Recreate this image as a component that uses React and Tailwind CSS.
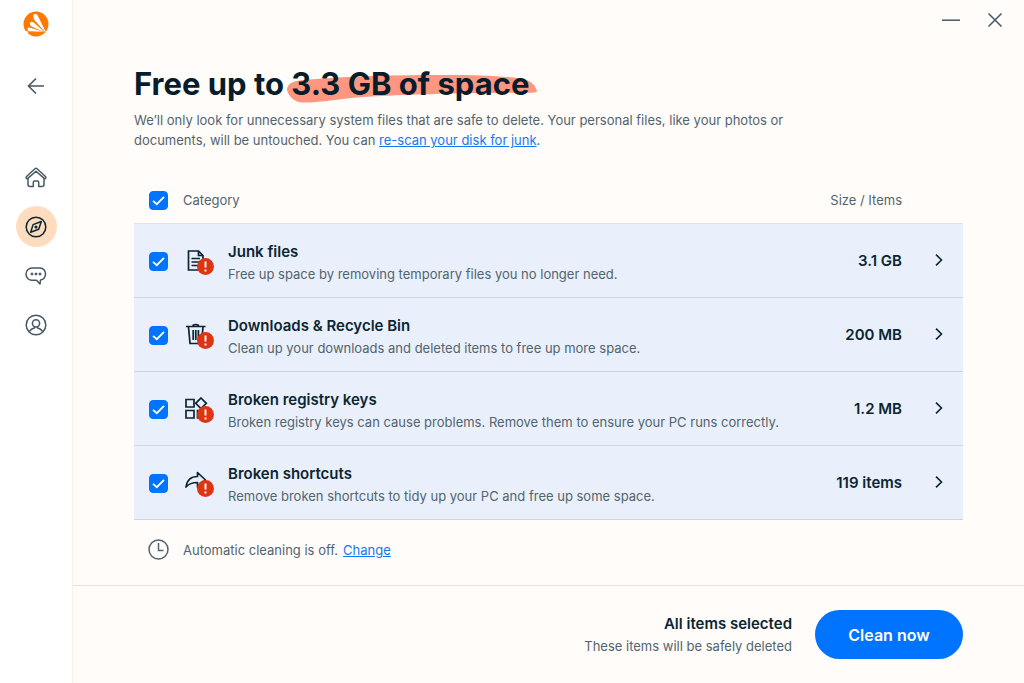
import React, { useState } from 'react';

const categories = [
    { id: 'junk', title: 'Junk files', text: 'Free up space by removing temporary files you no longer need.', size: '3.1 GB' },
    { id: 'downloads', title: 'Downloads & Recycle Bin', text: 'Clean up your downloads and deleted items to free up more space.', size: '200 MB' },
    { id: 'registry', title: 'Broken registry keys', text: 'Broken registry keys can cause problems. Remove them to ensure your PC runs correctly.', size: '1.2 MB' },
    { id: 'shortcuts', title: 'Broken shortcuts', text: 'Remove broken shortcuts to tidy up your PC and free up some space.', size: '119 items' },
];

const Logo = () => (
    <svg className="h-[26px] w-[26px]" viewBox="0 0 26 26" aria-hidden="true">
        <circle cx="13" cy="13" r="12.5" fill="#ff7800" />
        <g fill="#fff">
            <path d="M10.4 5.7C10 4.300 10.700 3.200 12 3.100C13.200 3 14.300 3.600 14.900 4.900L22.600 20.600C22.900 21.200 22.500 21.400 22.100 21L11.400 9C10.700 8.100 10.500 6.800 10.400 5.700Z" />
            <path d="M6.900 12.800C6.700 11.500 7.500 10.700 8.600 10.700C9.500 10.700 10.200 11.100 11 11.800L20.700 20.300C21.100 20.700 20.900 20.900 20.400 20.700L8.500 15.400C7.500 14.900 7 14 6.900 12.800Z" />
            <path d="M4.500 18.100C4.500 17.100 5.300 16.400 6.300 16.500L18.700 20.200C19.200 20.500 19.100 20.700 18.600 20.700L6.300 20.200C5.200 20.100 4.500 19.200 4.500 18.100Z" />
            <path d="M2 19.800L5.600 20.800L4.400 23.200Z" />
        </g>
    </svg>
);

const navItems = [
    {
        label: 'Home',
        icon: (
            <>
                <path d="M1.300 9.700L10.200 1.500Q11 0.900 11.800 1.500L20.700 9.700V11.200Q20 12.100 19.200 11.400L11 4.200L2.800 11.400Q2 12.100 1.300 11.200Z" />
                <path d="M3 11.500V17.500Q3 19.500 5 19.500H8.300V15.500Q8.300 14 9.500 14H12.500Q13.700 14 13.700 15.500V19.500H17Q19 19.500 19 17.500V11.500" />
            </>
        ),
    },
    {
        label: 'Explore',
        icon: (
            <>
                <circle cx="11" cy="11" r="9.800" />
                <path d="M16.300 5.500L13.700 13.200L5.700 16.300L8.100 8.600Z" />
                <circle cx="11" cy="11" r="0.800" fill="currentColor" />
            </>
        ),
    },
    {
        label: 'Messages',
        icon: (
            <>
                <path d="M7 3H15A5.700 5.700 0 0 1 20.500 9A5.700 5.700 0 0 1 15.500 15L15 19L11.500 15.200H7A5.900 6 0 0 1 7 3Z" />
                <g fill="currentColor" strokeWidth="0.800">
                    <circle cx="7" cy="9" r="1.100" />
                    <circle cx="11" cy="9" r="1.100" />
                    <circle cx="15" cy="9" r="1.100" />
                </g>
            </>
        ),
    },
    {
        label: 'Account',
        icon: (
            <>
                <circle cx="11" cy="11" r="9.800" />
                <circle cx="11" cy="9.300" r="3.600" />
                <path d="M4.300 17.500Q6.700 14.200 9.500 14V12.700M12.500 12.700V14Q15.300 14.200 17.700 17.500" />
            </>
        ),
    },
];

const categoryIcons = {
    junk: (
        <>
            <path d="M3.500 2H13.500L18 6.500V21H3.500Z" />
            <path d="M13.500 2V6.500H18" />
            <path d="M6.500 9.500H15M6.500 13H15M6.500 16.500H13" />
        </>
    ),
    downloads: (
        <>
            <path d="M1 3.500H20.500M8 3Q8 1.500 10.800 1.500Q13.500 1.500 13.500 3" />
            <path d="M3.500 4L5 20.500H16.500L18 4M8.200 7V17M10.800 7V17M13.400 7V17" />
        </>
    ),
    registry: (
        <>
            <path d="M1 2.500H9V10H1ZM1 13.500H9V21H1ZM12.500 13.500H20V21H12.500Z" />
            <path d="M16 1L21.300 6.300L16 11.500L10.700 6.300Z" />
        </>
    ),
    shortcuts: (
        <path d="M1 16C2 9 6.500 5.500 12.500 5.500V1.500L20.500 9L12.500 16V11.500C7.500 11.500 4 12.500 1 16Z" strokeLinejoin="round" />
    ),
};

const CategoryIcon = ({ id }) => (
    <svg className="block h-7 w-[30px]" viewBox="0 0 30 28" fill="none" aria-hidden="true">
        <g stroke="#0b2532" strokeWidth="1.700">{categoryIcons[id]}</g>
        <circle cx="20.500" cy="17.500" r="8.500" fill="#dd3514" />
        <path d="M20.500 12.600V18.600M20.500 20.600V22.400" stroke="#fff" strokeWidth="1.900" />
    </svg>
);

const Checkbox = ({ label, checked, onChange }) => (
    <span className="grid h-[19px] w-[19px]">
        <input
            type="checkbox"
            aria-label={label}
            checked={checked}
            onChange={onChange}
            className="peer col-start-1 row-start-1 h-[19px] w-[19px] appearance-none rounded border border-[#556770] checked:border-[#0074ff] checked:bg-[#0074ff]"
        />
        <svg
            className="pointer-events-none invisible col-start-1 row-start-1 h-[19px] w-[19px] peer-checked:visible"
            viewBox="0 0 19 19"
            fill="none"
            aria-hidden="true"
        >
            <path d="M4 9.800L7.800 13.200L15 5.800" stroke="#fff" strokeWidth="1.800" />
        </svg>
    </span>
);

const Sidebar = () => (
    <aside className="flex w-[73px] shrink-0 flex-col items-center border-r border-[#ffeee2] bg-white pt-[11px] text-[#455964]">
        <Logo />
        <button type="button" aria-label="Back" className="mt-9 flex h-[26px] w-10 items-center justify-center">
            <svg className="h-5 w-5" viewBox="0 0 20 20" fill="none" stroke="currentColor" strokeWidth="1.600" aria-hidden="true">
                <path d="M18 10H2.500M10 2.500L2.500 10L10 17.500" />
            </svg>
        </button>
        <nav className="mt-[58px] flex flex-col gap-2">
            {navItems.map((item) => (
                <a
                    key={item.label}
                    href="#"
                    aria-label={item.label}
                    className={
                        item.label === 'Explore'
                            ? 'flex h-[41px] w-[41px] items-center justify-center rounded-full bg-[#ffdcbd] text-[#0b2532]'
                            : 'flex h-[41px] w-[41px] items-center justify-center'
                    }
                >
                    <svg className="h-[22px] w-[22px]" viewBox="0 0 22 22" fill="none" stroke="currentColor" strokeWidth="1.500" strokeLinejoin="round" aria-hidden="true">
                        {item.icon}
                    </svg>
                </a>
            ))}
        </nav>
    </aside>
);

const App = () => {
    const [selected, setSelected] = useState(categories.map((c) => c.id));

    const allSelected = selected.length === categories.length;

    const toggle = (id) => {
        setSelected(selected.includes(id) ? selected.filter((s) => s !== id) : [...selected, id]);
    };

    const toggleAll = () => {
        setSelected(allSelected ? [] : categories.map((c) => c.id));
    };

    return (
        <div className="flex min-h-screen bg-[#fffcf9] font-['Inter',sans-serif] text-[13px] text-[#52646e]">
            <Sidebar />
            <div className="flex min-w-0 flex-1 flex-col">
                <header className="flex h-10 items-center justify-end gap-4 pr-[15px]">
                    <button type="button" aria-label="Minimize" className="flex h-7 w-7 items-center justify-center">
                        <svg className="h-5 w-5" viewBox="0 0 20 20" stroke="#455964" strokeWidth="1.500" aria-hidden="true">
                            <path d="M1 10.200H19" />
                        </svg>
                    </button>
                    <button type="button" aria-label="Close" className="flex h-7 w-7 items-center justify-center">
                        <svg className="h-5 w-5" viewBox="0 0 20 20" stroke="#455964" strokeWidth="1.500" aria-hidden="true">
                            <path d="M3.500 3.500L16.500 16.500M16.500 3.500L3.500 16.500" />
                        </svg>
                    </button>
                </header>

                <main className="flex-1 px-[61px] pt-6">
                    <h1 className="text-[31px] leading-10 font-bold text-[#071d2b]">
                        Free up to{' '}
                        <span className="relative isolate inline-block">
                            <svg
                                className="absolute top-[10px] -left-1 -z-10 h-[30px] w-[250px]"
                                viewBox="0 0 250 30"
                                preserveAspectRatio="none"
                                aria-hidden="true"
                            >
                                <path d="M0 15C1 9 6 7 16 6C60 2 110 1 160 1C190 1 225 2 240 6C246 9 250 14 250 17.500C248 19 244 19 238 18.700C190 19 110 20 64 24C45 26 30 29 15 28.500C6 28 0 20 0 15Z" fill="#ff967f" />
                            </svg>
                            3.3 GB of space
                        </span>
                    </h1>
                    <p className="mt-[6px] max-w-[670px] leading-5">
                        We’ll only look for unnecessary system files that are safe to delete. Your personal files, like your photos or documents, will be untouched. You can{' '}
                        <a href="#" className="text-[#1478f0] underline">re-scan your disk for junk</a>.
                    </p>

                    <table className="mt-7 w-full">
                        <thead>
                            <tr className="h-[45px] border-b border-[#e3e3e4] text-left">
                                <th className="w-[49px] pl-[15px]">
                                    <Checkbox label="Select all" checked={allSelected} onChange={toggleAll} />
                                </th>
                                <th colSpan={2} className="font-normal">Category</th>
                                <th className="w-[120px] text-right font-normal">Size / Items</th>
                                <th className="w-[61px]" aria-label="Details" />
                            </tr>
                        </thead>
                        <tbody>
                            {categories.map((c) => (
                                <tr key={c.id} className="h-[74px] border-b border-[#ccd6e2] bg-[#e9f0fb]">
                                    <td className="w-[49px] pt-[2px] pl-[15px]">
                                        <Checkbox label={c.title} checked={selected.includes(c.id)} onChange={() => toggle(c.id)} />
                                    </td>
                                    <td className="w-[45px] pt-[6px] pl-[2px]">
                                        <CategoryIcon id={c.id} />
                                    </td>
                                    <td className="pt-[6px]">
                                        <div className="text-[15px] leading-[22px] font-semibold text-[#0b2532]">{c.title}</div>
                                        <div className="leading-[22px]">{c.text}</div>
                                    </td>
                                    <td className="pt-[2px] text-right text-[15px] font-semibold text-[#0b2532]">{c.size}</td>
                                    <td className="pr-4 text-right">
                                        <button type="button" aria-label={`Open ${c.title}`} className="inline-flex h-6 w-4 items-center justify-center align-middle text-[#0b2532]">
                                            <svg className="h-3 w-2" viewBox="0 0 8 12" fill="none" stroke="currentColor" strokeWidth="1.600" aria-hidden="true">
                                                <path d="M1 0.600L6.500 6L1 11.400" />
                                            </svg>
                                        </button>
                                    </td>
                                </tr>
                            ))}
                        </tbody>
                    </table>

                    <div className="flex items-center py-[18px] pl-[14px] leading-6">
                        <svg className="mr-[14px] h-[21px] w-[21px]" viewBox="0 0 21 21" fill="none" stroke="currentColor" strokeWidth="1.500" aria-hidden="true">
                            <circle cx="10.500" cy="10.500" r="9.500" />
                            <path d="M10.500 4V11.500H15.500" />
                        </svg>
                        <span>Automatic cleaning is off.</span>
                        <a href="#" className="ml-[5px] text-[#1478f0] underline">Change</a>
                    </div>
                </main>

                <footer className="flex h-[98px] items-center justify-end gap-[23px] border-t border-[#e6e2de] px-[61px]">
                    <div className="text-right">
                        <div className="text-[15px] leading-[22px] font-semibold text-[#0b2532]">
                            {allSelected ? 'All items selected' : `${selected.length} items selected`}
                        </div>
                        <div className="leading-[22px]">These items will be safely deleted</div>
                    </div>
                    <button type="button" className="h-[49px] w-[148px] rounded-full bg-[#0074ff] text-base font-semibold text-white">
                        Clean now
                    </button>
                </footer>
            </div>
        </div>
    );
};

export default App;
